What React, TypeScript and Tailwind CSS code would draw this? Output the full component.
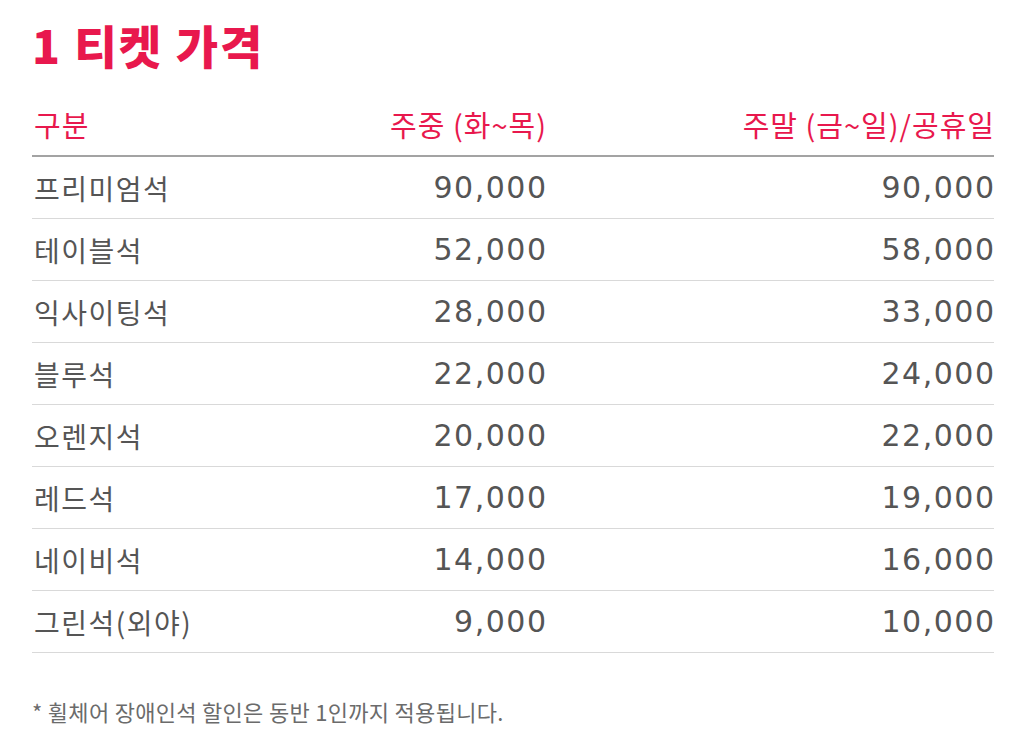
import React from "react";

const rows: [string, string, string][] = [
  ["프리미엄석", "90,000", "90,000"],
  ["테이블석", "52,000", "58,000"],
  ["익사이팅석", "28,000", "33,000"],
  ["블루석", "22,000", "24,000"],
  ["오렌지석", "20,000", "22,000"],
  ["레드석", "17,000", "19,000"],
  ["네이비석", "14,000", "16,000"],
  ["그린석(외야)", "9,000", "10,000"],
];

const kr = { fontFamily: '"Noto Sans CJK KR", "Noto Sans", sans-serif' };
const num = { fontFamily: '"DejaVu Sans", "Noto Sans CJK KR", sans-serif' };

export default function App() {
  return (
    <div className="w-[1036px] h-[738px] bg-white pl-[32px] pr-[42px] overflow-hidden" style={kr}>
      <div className="h-[95px] pt-[20px]">
        <div className="text-[46px] leading-[48px] font-black text-[#e8184d] tracking-[2px]">1 티켓 가격</div>
      </div>
      <div className="grid grid-cols-[250px_264px_1fr] h-[60px] items-center text-[29px] text-[#e8184d] tracking-[1px]">
        <div className="pl-[2px]">구분</div>
        <div className="text-right mr-[-1px]">주중 (화~목)</div>
        <div className="text-right mr-[-1px]">주말 (금~일)/공휴일</div>
      </div>
      <div className="h-[2px] bg-[#a3a3a3]" />
      {rows.map(([a, b, c]) => (
        <div
          key={a}
          className="grid grid-cols-[250px_264px_1fr] h-[62px] items-center border-b border-[#d9d9d9] text-[#555555]"
        >
          <div className="text-[28px] pl-[2px] tracking-[1.5px]">{a}</div>
          <div className="text-right text-[30px] tracking-[1.5px] mr-[-1.5px]" style={num}>{b}</div>
          <div className="text-right text-[30px] tracking-[1.5px] mr-[-1.5px]" style={num}>{c}</div>
        </div>
      ))}
      <div className="mt-[44px] leading-[28px] text-[22px] text-[#6b6b6b] tracking-[0.3px]">
        * 휠체어 장애인석 할인은 동반 1인까지 적용됩니다.
      </div>
    </div>
  );
}
